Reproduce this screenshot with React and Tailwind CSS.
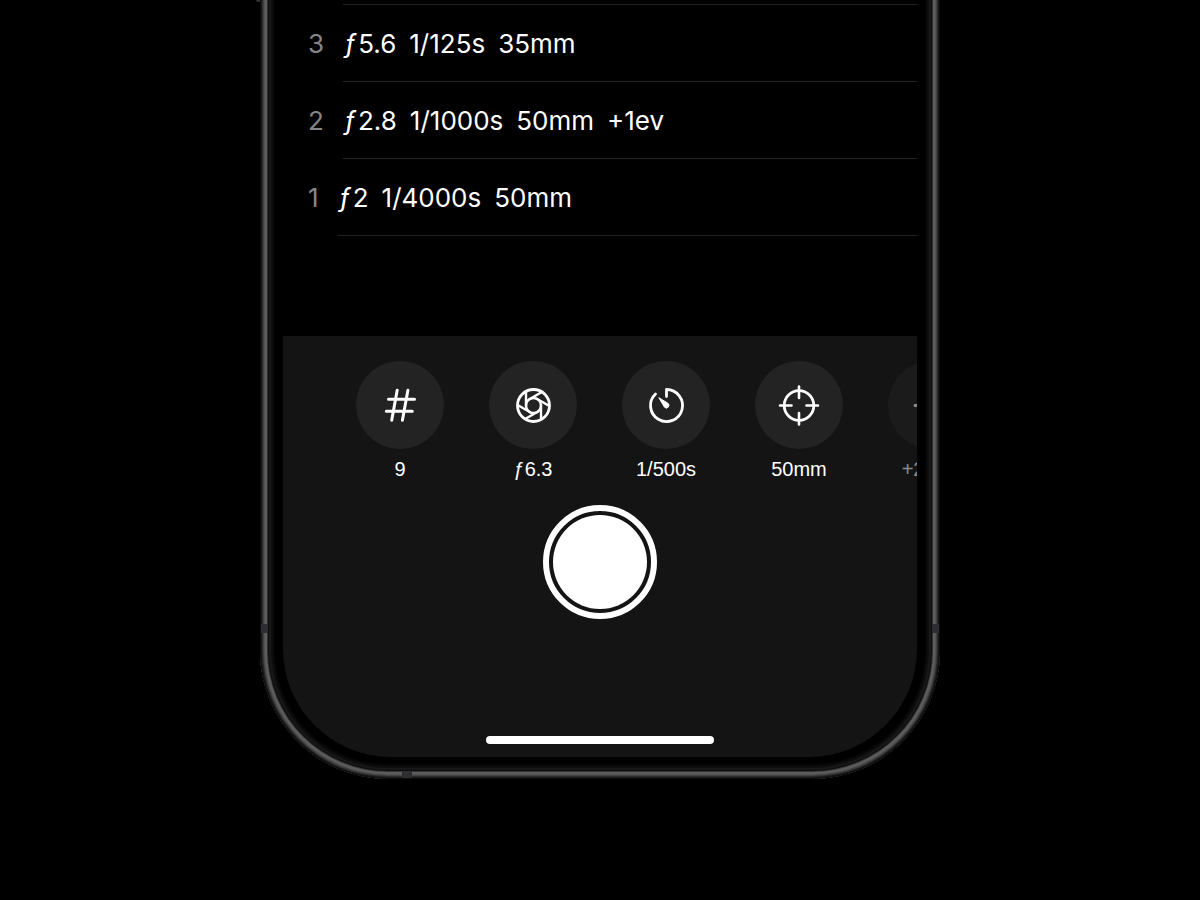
import React from "react";

const shots = [
  { n: 3, values: ["ƒ5.6", "1/125s", "35mm"] },
  { n: 2, values: ["ƒ2.8", "1/1000s", "50mm", "+1ev"] },
  { n: 1, values: ["ƒ2", "1/4000s", "50mm"] },
];

const iconProps = {
  viewBox: "0 0 48 48",
  className: "size-12",
  fill: "none",
  stroke: "currentColor",
  strokeWidth: 2.8,
  strokeLinecap: "round",
  strokeLinejoin: "round",
  "aria-hidden": true,
};

function HashIcon() {
  return (
    <svg {...iconProps} strokeWidth={3}>
      <path d="M21.200 9.300 15.700 39.200M31.900 9.300 26.400 39.200M12.500 18.300H38.500M10.300 30.200H36.300" />
    </svg>
  );
}

const bladeAngles = [0, 60, 120, 180, 240, 300];

function ApertureIcon() {
  return (
    <svg {...iconProps}>
      <circle cx="24.500" cy="24.500" r="16" />
      <circle cx="24.500" cy="24.500" r="7.500" strokeWidth="2.400" />
      {bladeAngles.map((a) => (
        <path key={a} d="M17 25 17 11.500" strokeWidth="2.400" transform={`rotate(${a} 24.5 24.5)`} />
      ))}
    </svg>
  );
}

function TimerIcon() {
  return (
    <svg {...iconProps}>
      <path d="M24.500 15.500V8.500A16 16 0 1 1 13.500 12.900" />
      <path d="M17 17 22.500 26.200A2.600 2.600 0 1 0 26.200 22.500Z" fill="currentColor" strokeWidth="1" />
    </svg>
  );
}

function ScopeIcon() {
  return (
    <svg {...iconProps}>
      <circle cx="24" cy="24.500" r="14.800" />
      <path d="M24 5.500V17M24 32V43.500M5 24.500H16.500M31.500 24.500H43" strokeWidth="2.600" />
    </svg>
  );
}

function ExposureIcon() {
  return (
    <svg {...iconProps}>
      <path d="M7 24.500H18M28 24.500H39" />
    </svg>
  );
}

const controls = [
  { label: "9", name: "Frame", Icon: HashIcon },
  { label: "ƒ6.3", name: "Aperture", Icon: ApertureIcon },
  { label: "1/500s", name: "Shutter speed", Icon: TimerIcon },
  { label: "50mm", name: "Focal length", Icon: ScopeIcon },
  { label: "+2/3ev", name: "Exposure", Icon: ExposureIcon, faded: true },
];

function ShotValue({ value }) {
  if (!value.startsWith("ƒ")) return <span>{value}</span>;
  return (
    <span>
      <i className="mr-[3px] pl-[2px]">ƒ</i>
      {value.slice(1)}
    </span>
  );
}

export default function App() {
  return (
    <main className="min-h-screen overflow-hidden bg-black text-white">
      <div className="relative mx-auto w-full max-w-[680px] rounded-b-[128px] bg-black px-[23px] pb-[22px]">
        <section className="h-[336px] pl-[25px] font-['Inter',sans-serif] text-[26px]">
          <div className="ml-[35px] h-[5px] border-b border-[#222]" />
          <ol>
            {shots.map((s) => (
              <li key={s.n} className="flex h-[77px] gap-[19px]">
                <span className="flex items-center text-[#85858a]">{s.n}</span>
                <div className="flex flex-1 items-center gap-[13px] border-b border-[#222]">
                  {s.values.map((v) => (
                    <ShotValue key={v} value={v} />
                  ))}
                </div>
              </li>
            ))}
          </ol>
        </section>
        <section className="flex flex-col items-center overflow-hidden rounded-b-[108px] bg-[#141414] pb-[13px] pt-[25px]">
          <div className="flex w-full gap-[45px] overflow-hidden pl-[73px] font-['Liberation_Sans',sans-serif]">
            {controls.map(({ label, name, Icon, faded }) => (
              <button
                key={label}
                aria-label={`${name} ${label}`}
                className={`flex w-[88px] shrink-0 flex-col items-center gap-[8px] ${faded ? "opacity-50" : ""}`}
              >
                <span className="flex size-[88px] items-center justify-center rounded-full bg-[#232323]">
                  <Icon />
                </span>
                <span className="text-[20px] leading-6">{label}</span>
              </button>
            ))}
          </div>
          <button
            aria-label="Record shot"
            className="mt-[24px] flex size-[114px] items-center justify-center rounded-full border-[6px] border-white"
          >
            <span className="size-[94px] rounded-full bg-white" />
          </button>
          <div className="mt-[117px] h-2 w-[228px] rounded-full bg-white" />
        </section>
        <div className="pointer-events-none absolute inset-x-0 -top-5 bottom-0 rounded-b-[128px] shadow-[inset_0_0_0_1px_#0c0c0c,inset_0_0_0_2px_#1a1a1a,inset_0_0_0_3px_#2c2c2c,inset_0_0_0_4px_#424242,inset_0_0_0_5px_#545454,inset_0_0_0_7px_#5c5c5c,inset_0_0_0_8px_#343434,inset_0_0_0_9px_#0c0c0c,inset_0_0_0_11px_#181818,inset_0_0_0_13px_#0e0e0e,inset_0_0_0_15px_#060606]" />
        <div className="absolute bottom-[146px] left-px h-[9px] w-[7px] bg-[#2e2e32]" />
        <div className="absolute bottom-[146px] right-px h-[9px] w-[7px] bg-[#2e2e32]" />
        <div className="absolute bottom-px left-[142px] h-[7px] w-[10px] bg-[#2e2e32]" />
        <div className="absolute -left-1 top-0 h-[2px] w-1 rounded-bl bg-[#333]" />
      </div>
    </main>
  );
}
